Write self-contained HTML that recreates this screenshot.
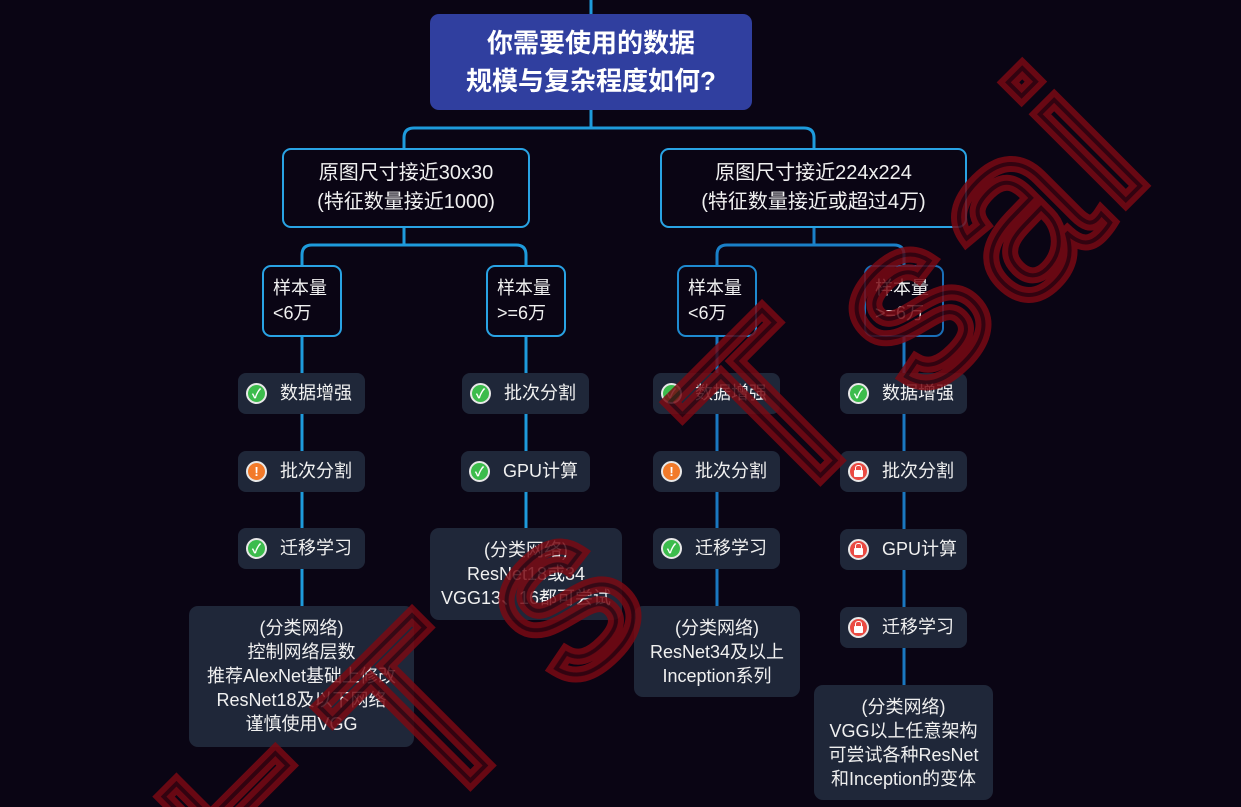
<!DOCTYPE html>
<html><head><meta charset="utf-8"><style>
*{margin:0;padding:0;box-sizing:border-box}
body{width:1241px;height:807px;background:#0a0514;position:relative;overflow:hidden;font-family:"Liberation Sans","Noto Sans CJK SC",sans-serif;color:#f0f0f0}
.b{position:absolute}
.root{left:430px;top:14px;width:322px;height:96px;background:#303f9f;border-radius:9px;color:#fff;font-weight:bold;font-size:26px;line-height:38px;text-align:center;padding-top:10px}
.l2{border:2.5px solid #29a3e4;border-radius:9px;font-size:20px;line-height:29px;text-align:center;padding-top:9px;height:80px}
.l3{border:2.5px solid #29a3e4;border-radius:9px;font-size:18px;line-height:25px;padding:9px 0 0 9px;width:80px;height:72px;top:265px}
.it{background:#1f2739;border-radius:8px;height:41px;font-size:18px;line-height:41px;padding-left:42px;white-space:nowrap}
.ic{position:absolute;left:8px;top:10px;width:21px;height:21px;border-radius:50%;border:2px solid #e8e8e8;color:#fff;font-size:13px;line-height:17px;text-align:center;font-weight:bold}
.g{background:#3cbc4c}.o{background:#f27a2a}.r{background:#ea4a42}
.r::before{content:"";position:absolute;left:5px;top:2px;width:5px;height:5px;border:1.5px solid #fff;border-bottom:none;border-radius:3px 3px 0 0}
.r::after{content:"";position:absolute;left:4px;top:7px;width:9px;height:7px;background:#fff;border-radius:1px}
.fin{background:#1f2739;border-radius:9px;font-size:18px;line-height:24px;text-align:center;padding-top:10px}
</style></head><body>
<svg class="b" style="left:0;top:0" width="1241" height="807">
<g fill="none" stroke-width="3">
<path d="M591 0V14M591 110V128M404 148V138Q404 128 414 128H804Q814 128 814 138V148" stroke="#1e9bdc"/>
<path d="M404 228V245M302 265V255Q302 245 312 245H516Q526 245 526 255V265" stroke="#1e9bdc"/>
<path d="M814 228V245M717 265V255Q717 245 727 245H894Q904 245 904 255V265" stroke="#1a80c8"/>
<path d="M302 336V606M526 336V528" stroke="#1e9bdc"/>
<path d="M717 336V606M904 336V685" stroke="#1a78c0"/>
</g>
</svg>
<div class="b root">你需要使用的数据<br>规模与复杂程度如何?</div>
<div class="b l2" style="left:282px;top:148px;width:248px">原图尺寸接近30x30<br>(特征数量接近1000)</div>
<div class="b l2" style="left:660px;top:148px;width:307px">原图尺寸接近224x224<br>(特征数量接近或超过4万)</div>
<div class="b l3" style="left:262px">样本量<br>&lt;6万</div>
<div class="b l3" style="left:486px">样本量<br>&gt;=6万</div>
<div class="b l3" style="left:677px;border-color:#1e8ad0">样本量<br>&lt;6万</div>
<div class="b l3" style="left:864px;border-color:#1a6fb8">样本量<br>&gt;=6万</div>

<div class="b it" style="left:238px;top:373px;width:127px"><span class="ic g">✓</span>数据增强</div>
<div class="b it" style="left:238px;top:451px;width:127px"><span class="ic o">!</span>批次分割</div>
<div class="b it" style="left:238px;top:528px;width:127px"><span class="ic g">✓</span>迁移学习</div>
<div class="b fin" style="left:189px;top:606px;width:225px;height:141px">(分类网络)<br>控制网络层数<br>推荐AlexNet基础上修改<br>ResNet18及以下网络<br>谨慎使用VGG</div>

<div class="b it" style="left:462px;top:373px;width:127px"><span class="ic g">✓</span>批次分割</div>
<div class="b it" style="left:461px;top:451px;width:129px"><span class="ic g">✓</span>GPU计算</div>
<div class="b fin" style="left:430px;top:528px;width:192px;height:92px">(分类网络)<br>ResNet18或34<br>VGG13、16都可尝试</div>

<div class="b it" style="left:653px;top:373px;width:127px"><span class="ic g">✓</span>数据增强</div>
<div class="b it" style="left:653px;top:451px;width:127px"><span class="ic o">!</span>批次分割</div>
<div class="b it" style="left:653px;top:528px;width:127px"><span class="ic g">✓</span>迁移学习</div>
<div class="b fin" style="left:634px;top:606px;width:166px;height:91px">(分类网络)<br>ResNet34及以上<br>Inception系列</div>

<div class="b it" style="left:840px;top:373px;width:127px"><span class="ic g">✓</span>数据增强</div>
<div class="b it" style="left:840px;top:451px;width:127px"><span class="ic r"></span>批次分割</div>
<div class="b it" style="left:840px;top:529px;width:127px"><span class="ic r"></span>GPU计算</div>
<div class="b it" style="left:840px;top:607px;width:127px"><span class="ic r"></span>迁移学习</div>
<div class="b fin" style="left:814px;top:685px;width:179px;height:115px">(分类网络)<br>VGG以上任意架构<br>可尝试各种ResNet<br>和Inception的变体</div>

<svg class="b" style="left:0;top:0;pointer-events:none" width="1241" height="807">
<defs>
<g id="wm" font-family="Liberation Sans, Noto Sans CJK SC, sans-serif" font-size="230" text-anchor="middle">
<text transform="translate(250,870) rotate(-45)" y="80">本</text>
<text transform="translate(420,715) rotate(-45)" y="82">T</text>
<text transform="translate(570,610) rotate(-45)" y="60">s</text>
<text transform="translate(770,410) rotate(-45)" y="82">T</text>
<text transform="translate(920,318) rotate(-45)" y="60">s</text>
<text transform="translate(1023,226) rotate(-45)" y="60">a</text>
<text transform="translate(1075,135) rotate(-45)" y="82">i</text>
</g>
</defs>
<g fill="none" opacity="0.85">
<use href="#wm" stroke="#7a0a14" stroke-width="16"/>
<use href="#wm" stroke="#3a0410" stroke-width="4"/>
</g>
</svg>
</body></html>
